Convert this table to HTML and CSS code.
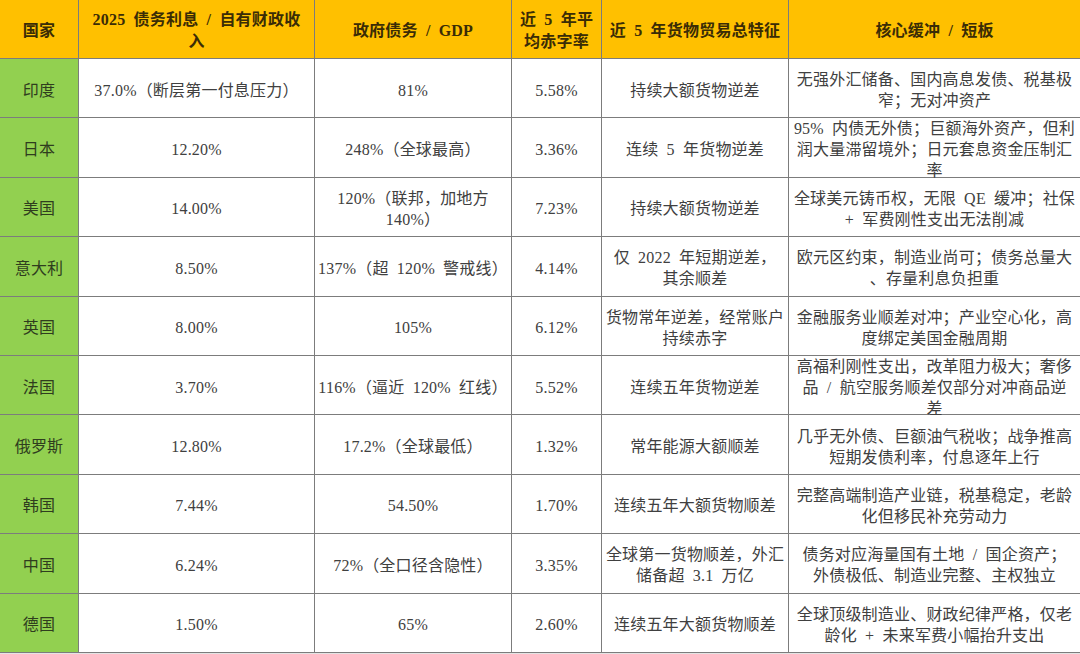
FILE: index.html
```html
<!DOCTYPE html>
<html lang="zh">
<head>
<meta charset="utf-8">
<title>债务对比</title>
<link rel="stylesheet" href="styles.css">
</head>
<body>
<div class="table">
  <div class="h">国家</div>
  <div class="h">2025 债务利息 / 自有财政收<br>入</div>
  <div class="h">政府债务 / GDP</div>
  <div class="h">近 5 年平<br>均赤字率</div>
  <div class="h">近 5 年货物贸易总特征</div>
  <div class="h">核心缓冲 / 短板</div>

  <div class="c">印度</div>
  <div class="d">37.0%（断层第一付息压力）</div>
  <div class="d">81%</div>
  <div class="d">5.58%</div>
  <div class="d">持续大额货物逆差</div>
  <div class="d">无强外汇储备、国内高息发债、税基极<br>窄；无对冲资产</div>

  <div class="c">日本</div>
  <div class="d">12.20%</div>
  <div class="d">248%（全球最高）</div>
  <div class="d">3.36%</div>
  <div class="d">连续 5 年货物逆差</div>
  <div class="d">95% 内债无外债；巨额海外资产，但利<br>润大量滞留境外；日元套息资金压制汇<br>率</div>

  <div class="c">美国</div>
  <div class="d">14.00%</div>
  <div class="d">120%（联邦，加地方<br>140%）</div>
  <div class="d">7.23%</div>
  <div class="d">持续大额货物逆差</div>
  <div class="d">全球美元铸币权，无限 QE 缓冲；社保<br>+ 军费刚性支出无法削减</div>

  <div class="c">意大利</div>
  <div class="d">8.50%</div>
  <div class="d">137%（超 120% 警戒线）</div>
  <div class="d">4.14%</div>
  <div class="d">仅 2022 年短期逆差，<br>其余顺差</div>
  <div class="d">欧元区约束，制造业尚可；债务总量大<br>、存量利息负担重</div>

  <div class="c">英国</div>
  <div class="d">8.00%</div>
  <div class="d">105%</div>
  <div class="d">6.12%</div>
  <div class="d">货物常年逆差，经常账户<br>持续赤字</div>
  <div class="d">金融服务业顺差对冲；产业空心化，高<br>度绑定美国金融周期</div>

  <div class="c">法国</div>
  <div class="d">3.70%</div>
  <div class="d">116%（逼近 120% 红线）</div>
  <div class="d">5.52%</div>
  <div class="d">连续五年货物逆差</div>
  <div class="d">高福利刚性支出，改革阻力极大；奢侈<br>品 / 航空服务顺差仅部分对冲商品逆<br>差</div>

  <div class="c">俄罗斯</div>
  <div class="d">12.80%</div>
  <div class="d">17.2%（全球最低）</div>
  <div class="d">1.32%</div>
  <div class="d">常年能源大额顺差</div>
  <div class="d">几乎无外债、巨额油气税收；战争推高<br>短期发债利率，付息逐年上行</div>

  <div class="c">韩国</div>
  <div class="d">7.44%</div>
  <div class="d">54.50%</div>
  <div class="d">1.70%</div>
  <div class="d">连续五年大额货物顺差</div>
  <div class="d">完整高端制造产业链，税基稳定，老龄<br>化但移民补充劳动力</div>

  <div class="c">中国</div>
  <div class="d">6.24%</div>
  <div class="d">72%（全口径含隐性）</div>
  <div class="d">3.35%</div>
  <div class="d">全球第一货物顺差，外汇<br>储备超 3.1 万亿</div>
  <div class="d">债务对应海量国有土地 / 国企资产；<br>外债极低、制造业完整、主权独立</div>

  <div class="c">德国</div>
  <div class="d">1.50%</div>
  <div class="d">65%</div>
  <div class="d">2.60%</div>
  <div class="d">连续五年大额货物顺差</div>
  <div class="d">全球顶级制造业、财政纪律严格，仅老<br>龄化 + 未来军费小幅抬升支出</div>
</div>
</body>
</html>
```

FILE: styles.css
```css
html, body {
  margin: 0;
  padding: 0;
  background: #e4e4e4;
}

body {
  width: 1080px;
  height: 654px;
  overflow: hidden;
  font-family: "Liberation Serif", "Noto Sans CJK SC", serif;
  font-size: 16px;
  letter-spacing: 0.2px;
  word-spacing: 4px;
  color: #404040;
}

.table {
  display: grid;
  grid-template-columns: 78px 235px 196px 89px 186px 291px;
  grid-template-rows: 58px repeat(10, 58.4px);
  gap: 1px;
  padding-bottom: 1px;
  background: #7c7c7c;
  width: 1080px;
}

.h, .c, .d {
  display: flex;
  align-items: center;
  justify-content: center;
  text-align: center;
  white-space: nowrap;
  line-height: 21px;
  padding: 4px 2px 0;
  box-sizing: border-box;
  overflow: visible;
}

.h {
  background: #ffc000;
  color: #3a2c06;
  font-weight: 700;
  line-height: 22px;
}

.c {
  background: #92d050;
  color: #2f3d1e;
}

.d {
  background: #ffffff;
}
```
